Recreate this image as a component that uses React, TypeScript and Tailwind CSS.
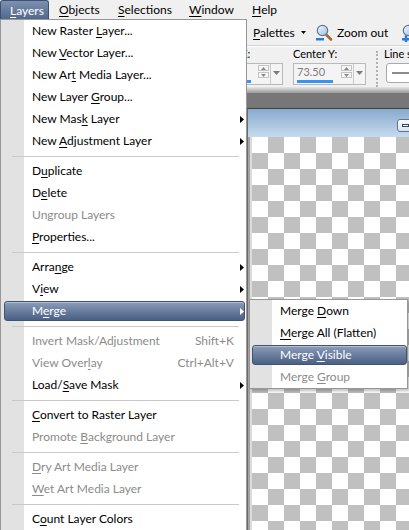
import clsx from "clsx";

type Entry =
  | { sep: true }
  | {
      sep?: false;
      label: string;
      u?: number;
      off?: boolean;
      sub?: boolean;
      keys?: string;
      on?: boolean;
    };

const layersMenu: Entry[] = [
  { label: "New Raster Layer...", u: 11 },
  { label: "New Vector Layer...", u: 4 },
  { label: "New Art Media Layer...", u: 6 },
  { label: "New Layer Group...", u: 10 },
  { label: "New Mask Layer", u: 7, sub: true },
  { label: "New Adjustment Layer", u: 4, sub: true },
  { sep: true },
  { label: "Duplicate", u: 1 },
  { label: "Delete", u: 1 },
  { label: "Ungroup Layers", off: true },
  { label: "Properties...", u: 0 },
  { sep: true },
  { label: "Arrange", u: 4, sub: true },
  { label: "View", u: 1, sub: true },
  { label: "Merge", u: 1, sub: true, on: true },
  { sep: true },
  { label: "Invert Mask/Adjustment", off: true, keys: "Shift+K" },
  { label: "View Overlay", u: 9, off: true, keys: "Ctrl+Alt+V" },
  { label: "Load/Save Mask", u: 5, sub: true },
  { sep: true },
  { label: "Convert to Raster Layer", u: 0 },
  { label: "Promote Background Layer", u: 8, off: true },
  { sep: true },
  { label: "Dry Art Media Layer", u: 0, off: true },
  { label: "Wet Art Media Layer", u: 0, off: true },
  { sep: true },
  { label: "Count Layer Colors", u: 1 },
];

const mergeMenu: Entry[] = [
  { label: "Merge Down", u: 6 },
  { label: "Merge All (Flatten)", u: 0 },
  { label: "Merge Visible", u: 6, on: true },
  { label: "Merge Group", u: 6, off: true },
];

const menuBar = [
  { label: "Layers", u: 0, w: "w-[49px]", open: true },
  { label: "Objects", u: 0, w: "w-[59px]" },
  { label: "Selections", u: 0, w: "w-[71px]" },
  { label: "Window", u: 0, w: "w-[63px]" },
  { label: "Help", u: 0, w: "w-[50px]" },
];

function Mnemonic({ text, u }: { text: string; u?: number }) {
  if (u === undefined) return <>{text}</>;
  return (
    <>
      {text.slice(0, u)}
      <span className="underline decoration-1 underline-offset-[2px]">{text[u]}</span>
      {text.slice(u + 1)}
    </>
  );
}

function SubArrow({ light }: { light?: boolean }) {
  return (
    <svg width="4" height="7" viewBox="0 0 4 7">
      <path d="M0 0L4 3.5L0 7Z" fill={light ? "#fff" : "#000"} />
    </svg>
  );
}

function MenuRow({ item, edge }: { item: Exclude<Entry, { sep: true }>; edge: string }) {
  return (
    <div className={clsx("h-[22px] py-px", edge)}>
      <div
        className={clsx(
          "flex h-full items-center rounded-[3px] border pl-[27px]",
          item.on
            ? "border-[#3f5377] bg-[linear-gradient(#8c9eba,#6c80a1_45%,#4c6084)] text-white shadow-[inset_0_1px_0_rgba(255,255,255,0.35)]"
            : "border-transparent",
          !item.on && item.off && "text-[#8b8b8b]"
        )}
      >
        <span className="flex-1 whitespace-nowrap">
          <Mnemonic text={item.label} u={item.u} />
        </span>
        {item.keys && <span className="whitespace-nowrap">{item.keys}</span>}
        <span className="flex w-[10px] justify-end">{item.sub && <SubArrow light={item.on} />}</span>
      </div>
    </div>
  );
}

function ZoomIcon({ plus }: { plus?: boolean }) {
  return (
    <svg width="18" height="18" viewBox="0 0 18 18">
      <defs>
        <linearGradient id={plus ? "lensP" : "lensM"} x1="0" y1="0" x2="1" y2="1">
          <stop offset="0" stopColor="#f4f9fe" />
          <stop offset="1" stopColor="#9cbde0" />
        </linearGradient>
      </defs>
      <line x1="11.5" y1="11" x2="16" y2="15.5" stroke="#a8682e" strokeWidth="2.6" strokeLinecap="round" />
      <circle cx="7.5" cy="6.5" r="5.2" fill={`url(#${plus ? "lensP" : "lensM"})`} stroke="#5d7896" strokeWidth="1.2" />
      <rect x="1" y="14" width="8" height="2.5" fill="#2b7bd4" />
      {plus && <rect x="3.75" y="11.25" width="2.5" height="8" fill="#2b7bd4" />}
    </svg>
  );
}

function Tri({ up }: { up?: boolean }) {
  return (
    <svg width="5" height="3" viewBox="0 0 5 3">
      <path d={up ? "M0 3L2.5 0L5 3Z" : "M0 0L5 0L2.5 3Z"} fill="#8a8a8a" />
    </svg>
  );
}

function SpinBox({ value, w }: { value: string; w: string }) {
  return (
    <div className={clsx("flex h-[22px] border border-[#b9b9b9] bg-[#f4f4f4]", w)}>
      <div className="flex flex-1 flex-col pl-[3px] pt-[1px]">
        <span className="text-[11px] leading-[13px] text-[#7d7d7d]">{value}</span>
        <span className="mb-[1px] mt-auto h-[3px] w-[36px] bg-[#3894f0]" />
      </div>
      <div className="flex w-[11px] flex-col gap-px pt-px">
        <span className="flex h-[6px] items-center justify-center border border-[#c4c4c4] bg-[#f7f7f7]">
          <Tri up />
        </span>
        <span className="flex h-[6px] items-center justify-center border border-[#c4c4c4] bg-[#f7f7f7]">
          <Tri />
        </span>
      </div>
      <div className="ml-px flex w-[12px] justify-center border-l border-[#c9c9c9] pt-[7px]">
        <svg width="7" height="4" viewBox="0 0 7 4">
          <path d="M0 0L7 0L3.5 4Z" fill="#7a7a7a" />
        </svg>
      </div>
    </div>
  );
}

export default function App() {
  return (
    <div className="relative flex h-[530px] w-[409px] flex-col overflow-hidden bg-[#f0f0f0] font-['Lato','Noto_Sans',sans-serif] text-[12px] text-black">
      {/* menu bar */}
      <div className="flex h-[20px] shrink-0">
        {menuBar.map((m) => (
          <div
            key={m.label}
            className={clsx(
              "flex h-[20px] shrink-0 items-center",
              m.w,
              m.open
                ? "rounded-t-[3px] border border-b-0 border-[#3d5072] bg-[linear-gradient(#7d92b0,#4f658a)] pl-[9px] text-white"
                : "pl-[10px]"
            )}
          >
            <Mnemonic text={m.label} u={m.u} />
          </div>
        ))}
      </div>

      {/* standard toolbar */}
      <div className="flex h-[25px] shrink-0 items-center pl-[253px]">
        <div className="flex w-[60px] shrink-0 items-center gap-[6px]">
          <span>
            <Mnemonic text="Palettes" u={0} />
          </span>
          <svg width="5" height="3" viewBox="0 0 5 3">
            <path d="M0 0L5 0L2.5 3Z" fill="#000" />
          </svg>
        </div>
        <div className="flex w-[86px] shrink-0 items-center gap-[4px] pl-[2px]">
          <ZoomIcon />
          <span className="whitespace-nowrap">Zoom out</span>
        </div>
        <div className="shrink-0 pl-[2px]">
          <ZoomIcon plus />
        </div>
      </div>

      {/* tool options */}
      <div className="flex h-[42px] shrink-0 items-start border-t border-[#d4d4d4] pl-[211px] pt-[2px] shadow-[inset_0_1px_0_#fff]">
        <div className="flex w-[72px] shrink-0 flex-col gap-[3px]">
          <span className="-ml-[6px] h-[12px] whitespace-nowrap text-[11px] leading-[12px]">Center X:</span>
          <SpinBox value="61.00" w="w-[72px]" />
        </div>
        <div className="ml-[10px] flex w-[73px] shrink-0 flex-col gap-[3px]">
          <span className="h-[12px] whitespace-nowrap text-[11px] leading-[12px]">Center Y:</span>
          <SpinBox value="73.50" w="w-[73px]" />
        </div>
        <div className="ml-[10px] mt-[3px] h-[36px] w-[3px] shrink-0 border-l-2 border-dotted border-[#b0b0b0]" />
        <div className="ml-[5px] flex shrink-0 flex-col gap-[3px]">
          <span className="h-[12px] whitespace-nowrap text-[11px] leading-[12px]">Line style:</span>
          <div className="ml-[2px] flex h-[20px] w-[60px] items-center rounded-[3px] border border-[#a9a9a9] bg-white pl-[5px]">
            <span className="h-[2px] w-[40px] bg-[#8c8c8c]" />
          </div>
        </div>
      </div>
      <div className="h-[6px] shrink-0 bg-[linear-gradient(#e6e6e6,#9a9a9a)]" />

      {/* workspace */}
      <div className="flex flex-1 flex-col bg-[#777777] pt-[15px]">
        <div className="ml-[246px] flex w-[300px] flex-1 flex-col border-l-2 border-t border-[#3f3f3f] border-l-[#6c6c6c]">
          <div className="h-[28px] shrink-0 bg-[linear-gradient(#89aacd,#c7dbef)] pl-[149px] pt-[10px]">
            <div className="flex h-[13px] w-[22px] items-center rounded-[3px] border border-[#5f7394] bg-[linear-gradient(#fdfdfd,#d9e2ed)] pl-[4px]">
              <span className="h-[3px] w-[7px] border border-[#33415a] bg-white" />
            </div>
          </div>
          <div className="flex flex-1">
            <div className="w-[2px] bg-[#a3a3a3]" />
            <div className="w-[2px] bg-[#dcdcdc]" />
            <div className="flex-1 bg-[conic-gradient(#c0c0c0_25%,#fff_0_50%,#c0c0c0_0_75%,#fff_0)] bg-[length:32px_32px]" />
          </div>
        </div>
      </div>

      {/* Layers drop-down */}
      <div className="absolute left-0 top-[19px] w-[247px] border border-[#979797] bg-[linear-gradient(to_right,#e2e2e2_23px,#fff_23px)] pb-[2px]">
        {layersMenu.map((item, i) =>
          item.sep ? (
            <div key={i} className="flex h-[8px] items-center pl-[11px] pr-[7px]">
              <span className="h-px flex-1 bg-[#c9c9c9]" />
            </div>
          ) : (
            <MenuRow key={i} item={item} edge="pl-[3px] pr-px" />
          )
        )}
      </div>

      {/* Merge submenu */}
      <div className="absolute left-[249px] top-[299px] w-[159px] border border-[#979797] bg-[linear-gradient(to_right,#e2e2e2_22px,#fff_22px)] shadow-[2px_2px_3px_rgba(0,0,0,0.25)]">
        {mergeMenu.map((item, i) => (item.sep ? null : <MenuRow key={i} item={item} edge="pl-[2px]" />))}
      </div>
    </div>
  );
}
